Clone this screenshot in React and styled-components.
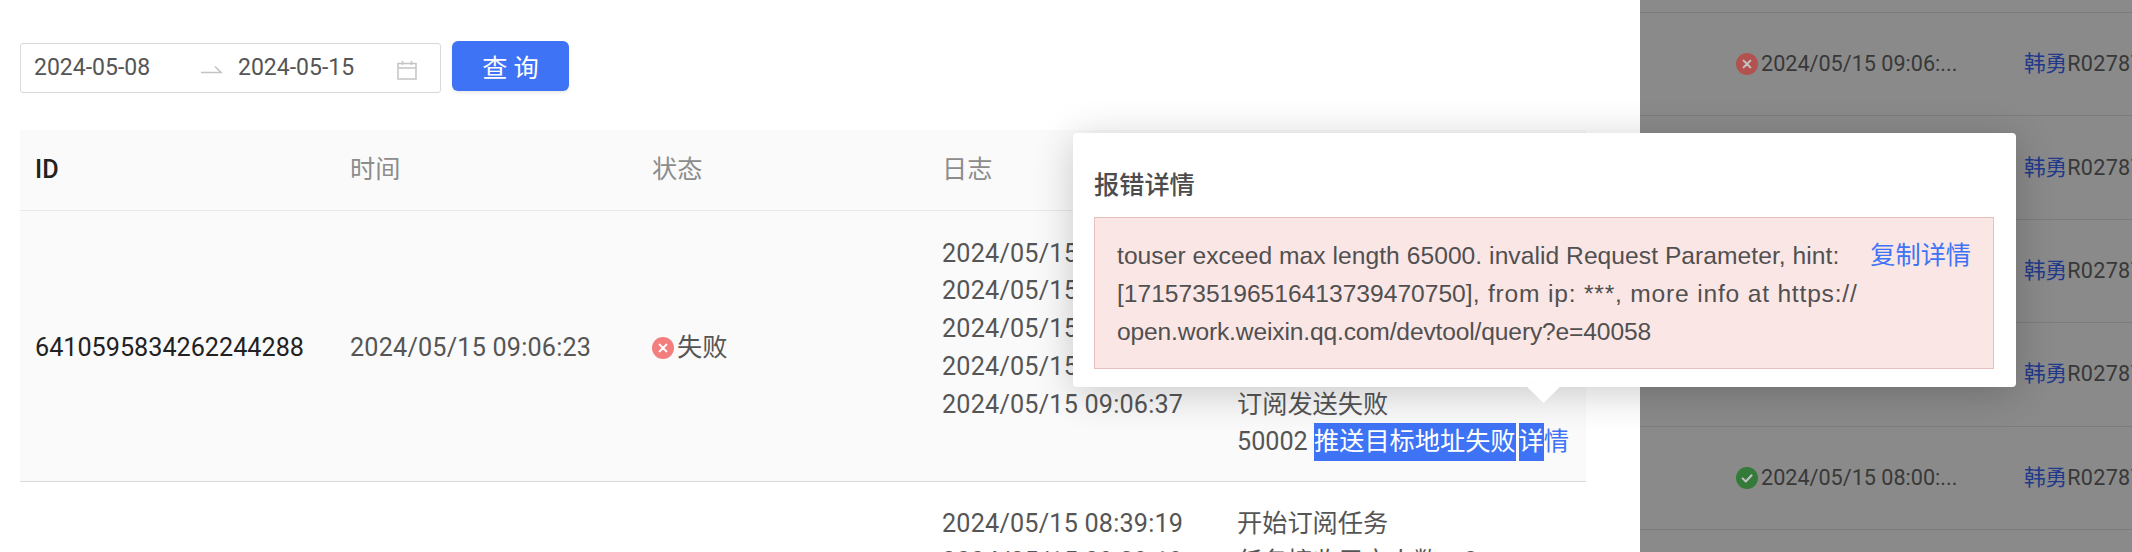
import styled, { createGlobalStyle } from "styled-components";

const GlobalStyle = createGlobalStyle`
	html, body {
		margin: 0;
		padding: 0;
		background: #fff;
	}
	* {
		box-sizing: border-box;
	}
`;

const FONT = `Roboto, "Noto Sans CJK SC", sans-serif`;
const BLUE = "#3f73f5";

const Page = styled.div`
	position: relative;
	display: flex;
	width: 2132px;
	height: 552px;
	overflow: hidden;
	font-family: ${FONT};
	font-size: 25.2px;
	line-height: 37.8px;
	color: #555;
`;

const Drawer = styled.div`
	width: 1640px;
	flex: none;
	padding: 41px 54px 0 20px;
	background: #fff;
`;

const Toolbar = styled.div`
	display: flex;
	align-items: flex-start;
	gap: 11px;
`;

const RangePicker = styled.div`
	display: flex;
	align-items: center;
	width: 421px;
	height: 50px;
	margin-top: 2px;
	padding: 0 22px 0 13px;
	border: 1px solid #d9d9d9;
	border-radius: 3px;
	font-size: 23px;
	color: #555;
`;

const DateText = styled.span`
	width: ${(p) => p.$width}px;
	flex: none;
`;

const PickerIcon = styled.svg`
	flex: none;
	color: #c4c4c4;
	margin-top: ${(p) => p.$top}px;
	margin-right: ${(p) => p.$right || 0}px;
`;

const SearchButton = styled.button`
	width: 117px;
	height: 50px;
	padding: 0;
	border: none;
	border-radius: 6px;
	background: ${BLUE};
	box-shadow: 0 2px 3px rgba(0, 0, 0, 0.08);
	font-family: ${FONT};
	font-size: 25.2px;
	color: #fff;
`;

const Table = styled.div`
	margin-top: 37px;
`;

const Row = styled.div`
	display: grid;
	grid-template-columns: 315px 302px 290px 295px 1fr;
	align-items: center;
	height: ${(p) => (p.$head ? "81px" : "auto")};
	padding: ${(p) => (p.$head ? "0" : "23.5px 0 19.5px")};
	background: ${(p) => (p.$shaded ? "#fafafa" : "#fff")};
	border-bottom: 1px solid ${(p) => (p.$head ? "#e8e8e8" : "#d9d9d9")};
`;

const HeadCell = styled.div`
	padding-left: 15px;
	color: ${(p) => (p.$strong ? "#222" : "#8c8c8c")};
	font-weight: ${(p) => (p.$strong ? 500 : 400)};
`;

const Cell = styled.div`
	padding-left: 15px;
	color: ${(p) => (p.$strong ? "#222" : "#555")};
	white-space: nowrap;
`;

const TimeCell = styled(Cell)`
	letter-spacing: 0.2px;
`;

const StatusCell = styled(Cell)`
	display: flex;
	align-items: center;
	gap: 3px;
`;

const Selected = styled.span`
	display: inline-block;
	height: 37.8px;
	margin-right: ${(p) => p.$gap || 0}px;
	background: ${BLUE};
	color: #fff;
`;

const LinkText = styled.span`
	color: ${BLUE};
`;

const Backdrop = styled.div`
	flex: 1;
	min-width: 0;
	padding-top: 12px;
	background: #8a8a8a;
	font-size: 21.6px;
	color: #383838;
`;

const BackdropRow = styled.div`
	display: flex;
	align-items: center;
	height: 103.4px;
	padding-left: ${(p) => (p.$status ? 96 : 384)}px;
	border-top: 1px solid #7c7c7c;
	white-space: nowrap;
`;

const BackdropStatus = styled.div`
	display: flex;
	align-items: center;
	gap: 3px;
	width: 288px;
	flex: none;
`;

const Owner = styled.span`
	color: #20398a;
`;

const OwnerCode = styled.span`
	letter-spacing: 0.3px;
`;

const Popover = styled.div`
	position: absolute;
	left: 1073px;
	top: 133px;
	width: 943px;
	height: 254px;
	padding: 34px 22px 0 21px;
	border-radius: 4px;
	background: #fff;
	box-shadow: 0 6px 40px rgba(0, 0, 0, 0.2);
	font-family: "Liberation Sans", "Noto Sans CJK SC", sans-serif;
	color: #505050;

	&::after {
		content: "";
		position: absolute;
		left: 459px;
		top: 243px;
		width: 23px;
		height: 23px;
		background: #fff;
		transform: rotate(45deg);
		box-shadow: 5px 5px 10px rgba(0, 0, 0, 0.1);
		clip-path: polygon(100% 0, 100% 100%, 0 100%, -40% 100%, 100% -40%);
	}
`;

const PopoverTitle = styled.div`
	font-weight: 500;
	height: 50px;
	color: #4c4c4c;
`;

const ErrorBox = styled.div`
	height: 152px;
	padding: 19px 22px 17px;
	border: 1px solid #e9bfbd;
	background: #fbe6e6;
	font-size: 24.6px;
`;

const CopyLink = styled.span`
	float: right;
	font-size: 25.2px;
	color: ${BLUE};
`;

const ErrorText = styled.span`
	letter-spacing: ${(p) => p.$spacing || 0}px;
`;

const StatusIcon = ({ kind, fill, mark, size = 22 }) => (
	<svg width={size} height={size} viewBox="0 0 22 22" style={{ flex: "none" }}>
		<circle cx="11" cy="11" r="11" fill={fill} />
		{kind === "fail" ? (
			<path d="M7.6 7.6l6.8 6.8M14.4 7.6l-6.8 6.8" stroke={mark} strokeWidth="2" strokeLinecap="round" />
		) : (
			<path d="M6.6 11.4l3.2 3.1 5.8-6.2" stroke={mark} strokeWidth="2" fill="none" strokeLinecap="round" strokeLinejoin="round" />
		)}
	</svg>
);

const SwapRight = () => (
	<PickerIcon $top={2} $right={15} width="22" height="12" viewBox="0 0 22 12">
		<path d="M0 9.5h20L14 3.5" fill="none" stroke="currentColor" strokeWidth="1.6" />
	</PickerIcon>
);

const CalendarIcon = () => (
	<PickerIcon $top={4} width="20" height="20" viewBox="0 0 20 20">
		<path
			d="M1 3.5h18v15.5H1zM1 8h18M5.5 1v4M14.5 1v4"
			fill="none"
			stroke="currentColor"
			strokeWidth="1.5"
		/>
	</PickerIcon>
);

const firstLog = [
	["2024/05/15 09:06:23", "开始订阅任务"],
	["2024/05/15 09:06:24", "任务接收用户人数：1"],
	["2024/05/15 09:06:30", "开始发送消息"],
	["2024/05/15 09:06:36", "发送消息中"],
	["2024/05/15 09:06:37", "订阅发送失败"],
];

const backdropRows = [
	{ status: "fail", time: "2024/05/15 09:06:..." },
	{},
	{},
	{},
	{ status: "ok", time: "2024/05/15 08:00:..." },
	{},
];

const App = () => {
	return (
		<Page>
			<GlobalStyle />
			<Drawer>
				<Toolbar>
					<RangePicker>
						<DateText $width={167}>2024-05-08</DateText>
						<SwapRight />
						<DateText $width={159}>2024-05-15</DateText>
						<CalendarIcon />
					</RangePicker>
					<SearchButton>查 询</SearchButton>
				</Toolbar>
				<Table>
					<Row $head $shaded>
						<HeadCell $strong>ID</HeadCell>
						<HeadCell>时间</HeadCell>
						<HeadCell>状态</HeadCell>
						<HeadCell>日志</HeadCell>
						<HeadCell />
					</Row>
					<Row $shaded>
						<Cell $strong>6410595834262244288</Cell>
						<TimeCell>2024/05/15 09:06:23</TimeCell>
						<StatusCell>
							<StatusIcon kind="fail" fill="#f27f7e" mark="#fff" />
							失败
						</StatusCell>
						<TimeCell>
							{firstLog.map(([time]) => (
								<div key={time}>{time}</div>
							))}
							<div>&nbsp;</div>
						</TimeCell>
						<Cell>
							{firstLog.map(([time, message]) => (
								<div key={time}>{message}</div>
							))}
							<div>
								50002{" "}
								<Selected $gap={3}>推送目标地址失败</Selected>
								<Selected>详</Selected>
								<LinkText>情</LinkText>
							</div>
						</Cell>
					</Row>
					<Row>
						<Cell />
						<Cell />
						<Cell />
						<TimeCell>
							<div>2024/05/15 08:39:19</div>
							<div>2024/05/15 08:39:19</div>
						</TimeCell>
						<Cell>
							<div>开始订阅任务</div>
							<div>任务接收用户人数：2</div>
						</Cell>
					</Row>
				</Table>
			</Drawer>
			<Backdrop>
				{backdropRows.map((row, i) => (
					<BackdropRow key={i} $status={row.status}>
						{row.status && (
							<BackdropStatus>
								<StatusIcon
									kind={row.status}
									fill={row.status === "fail" ? "#b2524f" : "#347a38"}
									mark="#c4c4c4"
								/>
								{row.time}
							</BackdropStatus>
						)}
						{i < 5 && (
							<span>
								<Owner>韩勇</Owner>
								<OwnerCode>R02787</OwnerCode>
							</span>
						)}
					</BackdropRow>
				))}
			</Backdrop>
			<Popover>
				<PopoverTitle>报错详情</PopoverTitle>
				<ErrorBox>
					<CopyLink>复制详情</CopyLink>
					<ErrorText $spacing={0.05}>touser exceed max length 65000. invalid Request Parameter, hint:</ErrorText>
					<br />
					[1715735196516413739470750]
					<ErrorText $spacing={0.8}>, from ip: ***, more info at https://</ErrorText>
					<br />
					<ErrorText $spacing={-0.15}>open.work.weixin.qq.com/devtool/query?e=40058</ErrorText>
				</ErrorBox>
			</Popover>
		</Page>
	);
};

export default App;
